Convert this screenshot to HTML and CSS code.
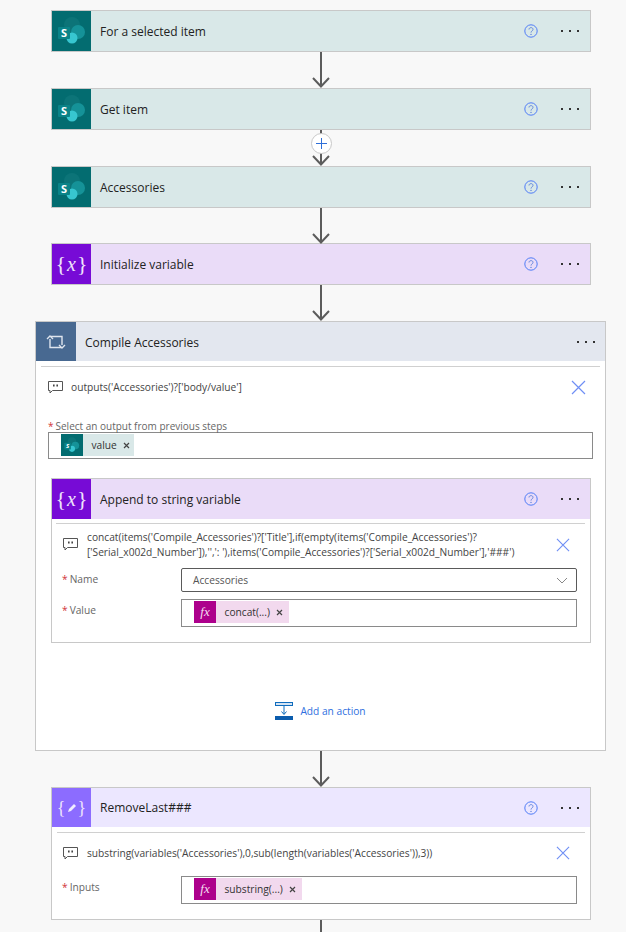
FILE: index.html
```html
<!DOCTYPE html>
<html lang="en">
<head>
    <meta charset="UTF-8">
    <title>Flow designer</title>
    <link rel="stylesheet" href="styles.css">
</head>
<body>
    <!-- shared icons -->
    <svg class="defs" width="0" height="0">
        <symbol id="sp" viewBox="0 0 40 40">
            <circle cx="20" cy="14" r="8" fill="#0c7478"/>
            <circle cx="26" cy="21" r="7" fill="#159298"/>
            <circle cx="20" cy="27" r="5.5" fill="#37c6d0"/>
            <rect x="6" y="16" width="12" height="12" rx="1" fill="#0a8388"/>
        </symbol>
        <symbol id="arrow" viewBox="0 0 18 36">
            <path d="M9 0V35" stroke="#5c5c5c" stroke-width="2" fill="none"/>
            <path d="M1 26L9 34.5L17 26" stroke="#5c5c5c" stroke-width="2" fill="none"/>
        </symbol>
        <symbol id="help" viewBox="0 0 14 14">
            <circle cx="7" cy="7" r="6.2" stroke="#4f7cf7" fill="none"/>
            <path d="M5 5.5C5 3 9 3 9 5.4C9 7 7 6.8 7 8.6" stroke="#5a7fd8" stroke-width=".9" fill="none"/>
            <circle cx="7" cy="10.4" r=".7" fill="#5a7fd8"/>
        </symbol>
        <symbol id="dots" viewBox="0 0 18 2">
            <rect x="0" y="0" width="2" height="2" fill="#333"/>
            <rect x="8" y="0" width="2" height="2" fill="#333"/>
            <rect x="16" y="0" width="2" height="2" fill="#333"/>
        </symbol>
        <symbol id="comment" viewBox="0 0 15 13">
            <path d="M.5 .5H14.5V9.5H4.5L2 12V9.5H.5Z" stroke="#555" fill="none"/>
            <rect x="5" y="3.5" width="1.6" height="2" fill="#444"/>
            <rect x="8.4" y="3.5" width="1.6" height="2" fill="#444"/>
        </symbol>
        <symbol id="close" viewBox="0 0 15 15">
            <path d="M1 1L14 14M14 1L1 14" stroke="#6f8ff5" stroke-width="1.2" fill="none"/>
        </symbol>
        <symbol id="x-small" viewBox="0 0 7 7">
            <path d="M1 1L6 6M6 1L1 6" stroke="#444" stroke-width="1.2" fill="none"/>
        </symbol>
    </svg>

    <div class="canvas">

        <div class="card">
            <div class="head head-sp">
                <div class="block block-sp"><svg class="sp-icon" viewBox="0 0 40 40"><use href="#sp"/><text x="12" y="26" class="sp-s">S</text></svg></div>
                <div class="title">For a selected item</div>
                <svg class="help"><use href="#help"/></svg>
                <svg class="dots"><use href="#dots"/></svg>
            </div>
        </div>
        <div class="link"><svg class="arrow"><use href="#arrow"/></svg></div>

        <div class="card">
            <div class="head head-sp">
                <div class="block block-sp"><svg class="sp-icon" viewBox="0 0 40 40"><use href="#sp"/><text x="12" y="26" class="sp-s">S</text></svg></div>
                <div class="title">Get item</div>
                <svg class="help"><use href="#help"/></svg>
                <svg class="dots"><use href="#dots"/></svg>
            </div>
        </div>
        <div class="link">
            <svg class="arrow"><use href="#arrow"/></svg>
            <div class="plus">
                <svg width="11" height="11" viewBox="0 0 11 11"><path d="M5.5 0V11M0 5.5H11" stroke="#2f6fd8" fill="none"/></svg>
            </div>
        </div>

        <div class="card">
            <div class="head head-sp">
                <div class="block block-sp"><svg class="sp-icon" viewBox="0 0 40 40"><use href="#sp"/><text x="12" y="26" class="sp-s">S</text></svg></div>
                <div class="title">Accessories</div>
                <svg class="help"><use href="#help"/></svg>
                <svg class="dots"><use href="#dots"/></svg>
            </div>
        </div>
        <div class="link link-short"><svg class="arrow"><use href="#arrow"/></svg></div>

        <div class="card">
            <div class="head head-var">
                <div class="block block-var"><span class="brace">{<i>x</i>}</span></div>
                <div class="title">Initialize variable</div>
                <svg class="help"><use href="#help"/></svg>
                <svg class="dots"><use href="#dots"/></svg>
            </div>
        </div>
        <div class="link"><svg class="arrow"><use href="#arrow"/></svg></div>

        <!-- Apply to each -->
        <div class="card card-loop">
            <div class="head head-loop">
                <div class="block block-loop">
                    <svg width="20" height="14" viewBox="0 0 20 14">
                        <path d="M4 4V12.5H15M16 10V1.5H5" stroke="#dfe5ee" stroke-width="1.4" fill="none"/>
                        <path d="M1 4L4 1L7 4M13 10L16 13L19 10" stroke="#dfe5ee" stroke-width="1.4" fill="none"/>
                    </svg>
                </div>
                <div class="title title-loop">Compile Accessories</div>
                <svg class="dots"><use href="#dots"/></svg>
            </div>
            <div class="rule"></div>
            <div class="note note-loop">
                <svg class="note-icon"><use href="#comment"/></svg>
                <div class="note-text">outputs('Accessories')?['body/value']</div>
                <svg class="note-close"><use href="#close"/></svg>
            </div>
            <div class="output-label"><span class="req">*</span>Select an output from previous steps</div>
            <div class="input input-output">
                <span class="chip chip-sp">
                    <span class="chip-block block-sp"><svg class="sp-mini" viewBox="0 0 40 40"><use href="#sp"/><text x="12" y="26" class="sp-s">S</text></svg></span>
                    <span class="chip-text">value</span>
                    <svg class="chip-x"><use href="#x-small"/></svg>
                </span>
            </div>

            <div class="card card-inner">
                <div class="head head-var">
                    <div class="block block-var"><span class="brace">{<i>x</i>}</span></div>
                    <div class="title">Append to string variable</div>
                    <svg class="help"><use href="#help"/></svg>
                    <svg class="dots"><use href="#dots"/></svg>
                </div>
                <div class="rule"></div>
                <div class="note note-two">
                    <svg class="note-icon"><use href="#comment"/></svg>
                    <div class="note-text">concat(items('Compile_Accessories')?['Title'],if(empty(items('Compile_Accessories')?<br>['Serial_x002d_Number']),'',': '),items('Compile_Accessories')?['Serial_x002d_Number'],'###')</div>
                    <svg class="note-close"><use href="#close"/></svg>
                </div>
                <div class="field">
                    <div class="field-label"><span class="req">*</span>Name</div>
                    <div class="input input-select">
                        <span>Accessories</span>
                        <svg width="12" height="7" viewBox="0 0 12 7"><path d="M1 1L6 6L11 1" stroke="#888" fill="none"/></svg>
                    </div>
                </div>
                <div class="field">
                    <div class="field-label"><span class="req">*</span>Value</div>
                    <div class="input">
                        <span class="chip chip-fx">
                            <span class="chip-block block-fx">fx</span>
                            <span class="chip-text">concat(...)</span>
                            <svg class="chip-x"><use href="#x-small"/></svg>
                        </span>
                    </div>
                </div>
            </div>

            <div class="add-action">
                <svg width="18" height="18" viewBox="0 0 18 18">
                    <rect x=".5" y=".5" width="17" height="3" fill="#d5e4f3" stroke="#0f6cbd"/>
                    <rect y="14" width="18" height="4" fill="#0b5cad"/>
                    <path d="M9 4V12M6.5 9.5L9 12.5L11.5 9.5" stroke="#0f6cbd" fill="none"/>
                </svg>
                <span>Add an action</span>
            </div>
        </div>
        <div class="link"><svg class="arrow"><use href="#arrow"/></svg></div>

        <div class="card">
            <div class="head head-expr">
                <div class="block block-expr">
                    <span class="brace brace-expr">{<svg width="10" height="10" viewBox="0 0 10 10"><path d="M1 9L2 6L7 1L9 3L4 8Z" fill="#f0ecff"/></svg>}</span>
                </div>
                <div class="title">RemoveLast###</div>
                <svg class="help"><use href="#help"/></svg>
                <svg class="dots"><use href="#dots"/></svg>
            </div>
            <div class="rule"></div>
            <div class="note note-one">
                <svg class="note-icon"><use href="#comment"/></svg>
                <div class="note-text">substring(variables('Accessories'),0,sub(length(variables('Accessories')),3))</div>
                <svg class="note-close"><use href="#close"/></svg>
            </div>
            <div class="field field-last">
                <div class="field-label"><span class="req">*</span>Inputs</div>
                <div class="input">
                    <span class="chip chip-fx">
                        <span class="chip-block block-fx">fx</span>
                        <span class="chip-text">substring(...)</span>
                        <svg class="chip-x"><use href="#x-small"/></svg>
                    </span>
                </div>
            </div>
        </div>
        <div class="tail"></div>
    </div>
</body>
</html>
```

FILE: styles.css
```css
html, body {
    margin: 0;
    height: 932px;
    overflow: hidden;
}

body {
    background-color: #f8f8f8;
    font-family: "Open Sans", "Noto Sans", sans-serif;
    color: #222;
}

.defs {
    position: absolute;
}

.sp-s {
    font-family: "Open Sans", sans-serif;
    font-size: 11px;
    font-weight: 700;
    fill: #fff;
    text-anchor: middle;
}

.canvas {
    display: flex;
    flex-direction: column;
    align-items: center;
    padding-top: 10px;
    padding-left: 16px;
}

.card {
    width: 540px;
    box-sizing: border-box;
    border: 1px solid #c8c8c8;
    background-color: #fff;
}

.head {
    display: flex;
    align-items: center;
    height: 40px;
}

.head-sp { background-color: #d9e8e8; }
.head-var { background-color: #eadcf8; }
.head-loop { background-color: #e3e7ef; height: 39px; }
.head-expr { background-color: #ece7ff; height: 39px; }

.block {
    width: 39px;
    height: 100%;
    flex: none;
    display: flex;
    align-items: center;
    justify-content: center;
}

.block-sp { background-color: #036c70; }
.block-var { background-color: #770bd6; }
.block-loop { background-color: #486991; width: 40px; }
.block-expr { background-color: #8c6cff; }
.block-fx { background-color: #ad008c; }

.sp-icon {
    width: 40px;
    height: 40px;
    flex: none;
}

.brace {
    font-family: "Liberation Serif", serif;
    font-size: 22px;
    line-height: 1;
    color: #efe4fb;
}

.brace i {
    font-size: 20px;
    padding: 0 1px;
}

.brace-expr {
    display: flex;
    align-items: center;
    font-size: 18px;
    gap: 1px;
}

.title {
    flex: 1;
    padding-left: 9px;
    font-size: 12px;
}

.title-loop {
    padding-top: 1px;
}

.help {
    width: 14px;
    height: 14px;
    margin-right: 23px;
}

.dots {
    width: 18px;
    height: 2px;
    margin-right: 11px;
}

.link {
    position: relative;
    height: 36px;
    width: 18px;
}

.link-short {
    height: 35px;
}

.arrow {
    display: block;
    width: 18px;
    height: 36px;
}

.plus {
    position: absolute;
    left: -1px;
    top: 3px;
    width: 19px;
    height: 19px;
    border: 1px solid #c8c8c8;
    border-radius: 50%;
    background-color: #fff;
    display: flex;
    align-items: center;
    justify-content: center;
}

.card-loop {
    width: 571px;
    height: 430px;
    flex: none;
    margin-left: -1px;
}

.card-loop > .head .dots {
    margin-right: 10px;
}

.rule {
    height: 1px;
    margin: 5px 5px 0;
    background-color: #d0d0d0;
}

.card-inner .rule {
    margin: 4px 5px 0 4px;
}

.note {
    display: flex;
    align-items: center;
    font-size: 10.2px;
    line-height: 15px;
    color: #444;
}

.note-icon {
    width: 15px;
    height: 13px;
    flex: none;
}

.note-text {
    flex: 1;
    white-space: nowrap;
    padding-left: 9px;
}

.note-close {
    width: 14px;
    height: 14px;
    flex: none;
}

.note-loop {
    height: 40px;
    padding: 0 19px 0 12px;
}

.note-loop .note-text {
    padding-left: 8px;
}

.note-loop .note-close {
    width: 15px;
    height: 15px;
}

.output-label {
    margin: 13px 0 0 12px;
    font-size: 10px;
    line-height: 12px;
    color: #666;
}

.req {
    color: #d13438;
    margin-right: 2px;
}

.input {
    box-sizing: border-box;
    flex: 1;
    height: 28px;
    border: 1px solid #8a8a8a;
    background-color: #fff;
    padding: 1px 0 0 12px;
    display: flex;
    align-items: flex-start;
}

.input-output {
    margin: 0 12px;
    height: 27px;
    flex: none;
}

.chip {
    display: inline-flex;
    align-items: center;
    height: 22px;
    font-size: 10.2px;
    color: #333;
}

.chip-sp { background-color: #d9e8e8; width: 73px; }
.chip-fx { background-color: #f2d9ee; padding-right: 6px; }

.chip-block {
    width: 22px;
    height: 22px;
    flex: none;
    display: flex;
    align-items: center;
    justify-content: center;
    color: #f5dff0;
    font-family: "Liberation Serif", serif;
    font-style: italic;
    font-size: 13px;
}

.sp-mini {
    width: 22px;
    height: 22px;
}

.chip-text {
    padding-left: 8.5px;
}

.chip-x {
    width: 7px;
    height: 7px;
    margin-left: 6px;
}

.card-inner {
    height: 165px;
    margin: 19px 0 0 15px;
}

.note-two {
    height: 33px;
    padding: 4px 20px 0 11px;
}

.field {
    display: flex;
    align-items: flex-start;
    margin-top: 7px;
    padding: 0 13px 0 10px;
}

.input-select {
    height: 24px;
    align-items: center;
    justify-content: space-between;
    padding: 0 8px 0 11px;
    border-color: #5a5a5a;
    border-radius: 2px;
    font-size: 10.2px;
    color: #555;
}

.field-label {
    width: 119px;
    flex: none;
    font-size: 10.2px;
    line-height: 22px;
    color: #666;
}

.add-action {
    display: flex;
    align-items: center;
    justify-content: center;
    gap: 7px;
    margin-top: 59px;
    font-size: 10.2px;
    color: #2f6fe0;
}

.note-one {
    height: 40px;
    padding: 0 20px 3px 11px;
}

.field-last {
    margin: 0 0 15px;
}

.tail {
    width: 2px;
    height: 12px;
    background-color: #5c5c5c;
}
```
